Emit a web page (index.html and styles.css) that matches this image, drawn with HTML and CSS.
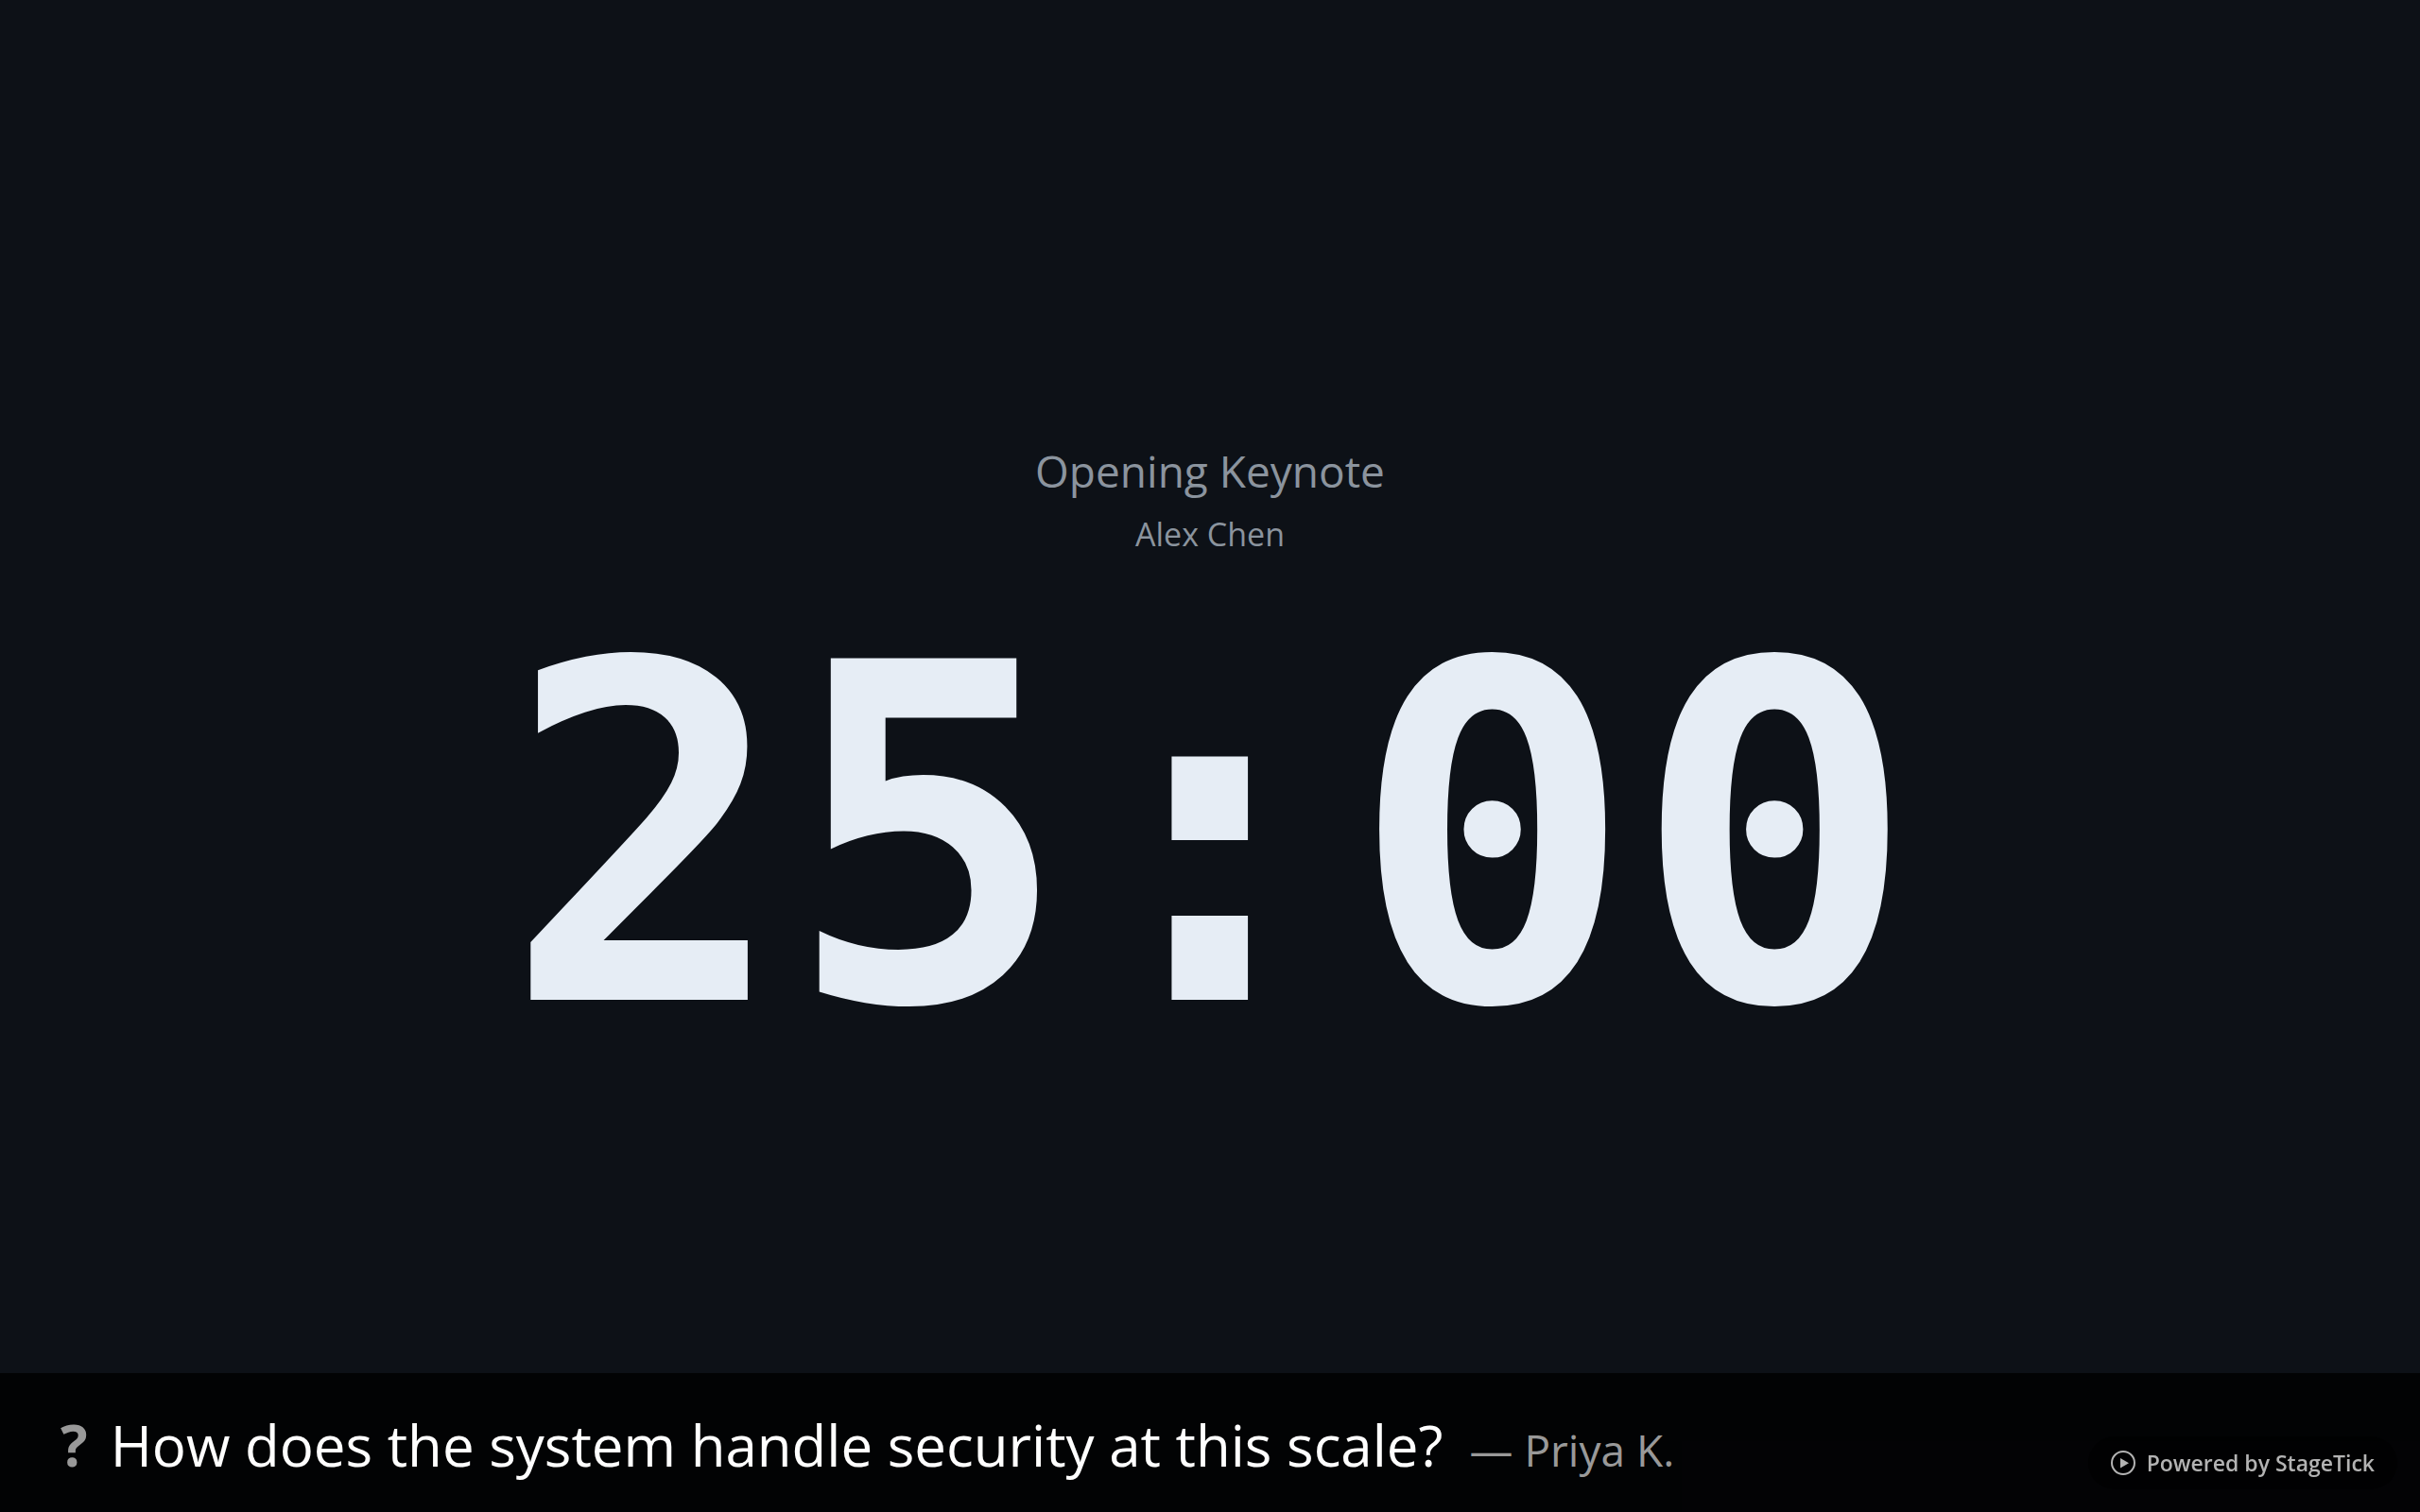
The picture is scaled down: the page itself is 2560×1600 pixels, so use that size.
FILE: index.html
```html
<!DOCTYPE html>
<html lang="en">
<head>
    <meta charset="UTF-8">
    <meta name="viewport" content="width=device-width, initial-scale=1.0">
    <title>StageTick</title>
    <link rel="stylesheet" href="styles.css">
</head>
<body>

<!-- Timer -->
<main class="stage">
    <h1 class="session-title">Opening Keynote</h1>
    <p class="session-speaker">Alex Chen</p>
    <div class="timer" role="timer">25:00</div>
</main>

<!-- Audience question -->
<footer class="question-bar">
    <span class="question-mark">?</span>
    <p class="question-text">How does the system handle security at this scale?</p>
    <span class="question-author">— Priya K.</span>
</footer>

<a class="badge" href="#">
    <svg class="badge-icon" viewBox="0 0 26 26" aria-hidden="true">
        <circle cx="13" cy="13" r="12" fill="none" stroke="currentColor" stroke-width="2"/>
        <path d="M10 8v10.500l9-5.250z" fill="currentColor"/>
    </svg>
    <span>Powered by StageTick</span>
</a>

</body>
</html>
```
FILE: styles.css
```css
/* General Reset */
* {
    margin: 0;
    padding: 0;
    box-sizing: border-box;
}

body {
    font-family: 'Segoe UI', 'Open Sans', 'Noto Sans', sans-serif;
    background-color: #0d1117;
    color: #e6edf5;
    min-height: 100vh;
    display: flex;
    flex-direction: column;
    overflow: hidden;
}

/* Timer */
.stage {
    flex: 1;
    display: flex;
    flex-direction: column;
    align-items: center;
    justify-content: center;
    padding-top: 170px;
}

.session-title {
    font-size: 46px;
    font-weight: 400;
    line-height: 70px;
    color: #8b949e;
}

.session-speaker {
    font-size: 34px;
    line-height: 64px;
    color: #8b949e;
}

.timer {
    font-family: 'DejaVu Sans Mono', monospace;
    font-size: 496px;
    font-weight: 700;
    line-height: 500px;
    margin-top: 40px;
    margin-bottom: 24px;
}

/* Question bar */
.question-bar {
    display: flex;
    align-items: baseline;
    background-color: rgba(0, 0, 0, 0.8);
    padding: 36px 64px 26px;
    line-height: 80px;
}

.question-mark {
    font-size: 60px;
    font-weight: 700;
    color: #999;
    margin-right: 24px;
}

.question-text {
    font-size: 60px;
    color: #fff;
}

.question-author {
    font-size: 46px;
    color: #999;
    margin-left: 28px;
}

/* Badge */
.badge {
    position: fixed;
    right: 24px;
    bottom: 24px;
    display: flex;
    align-items: center;
    gap: 12px;
    padding: 12px 24px;
    border-radius: 28px;
    background-color: rgba(0, 0, 0, 0.6);
    color: #b3b3b3;
    font-size: 23px;
    font-weight: 600;
    line-height: 32px;
    text-decoration: none;
}

.badge-icon {
    width: 26px;
    height: 26px;
}
```
